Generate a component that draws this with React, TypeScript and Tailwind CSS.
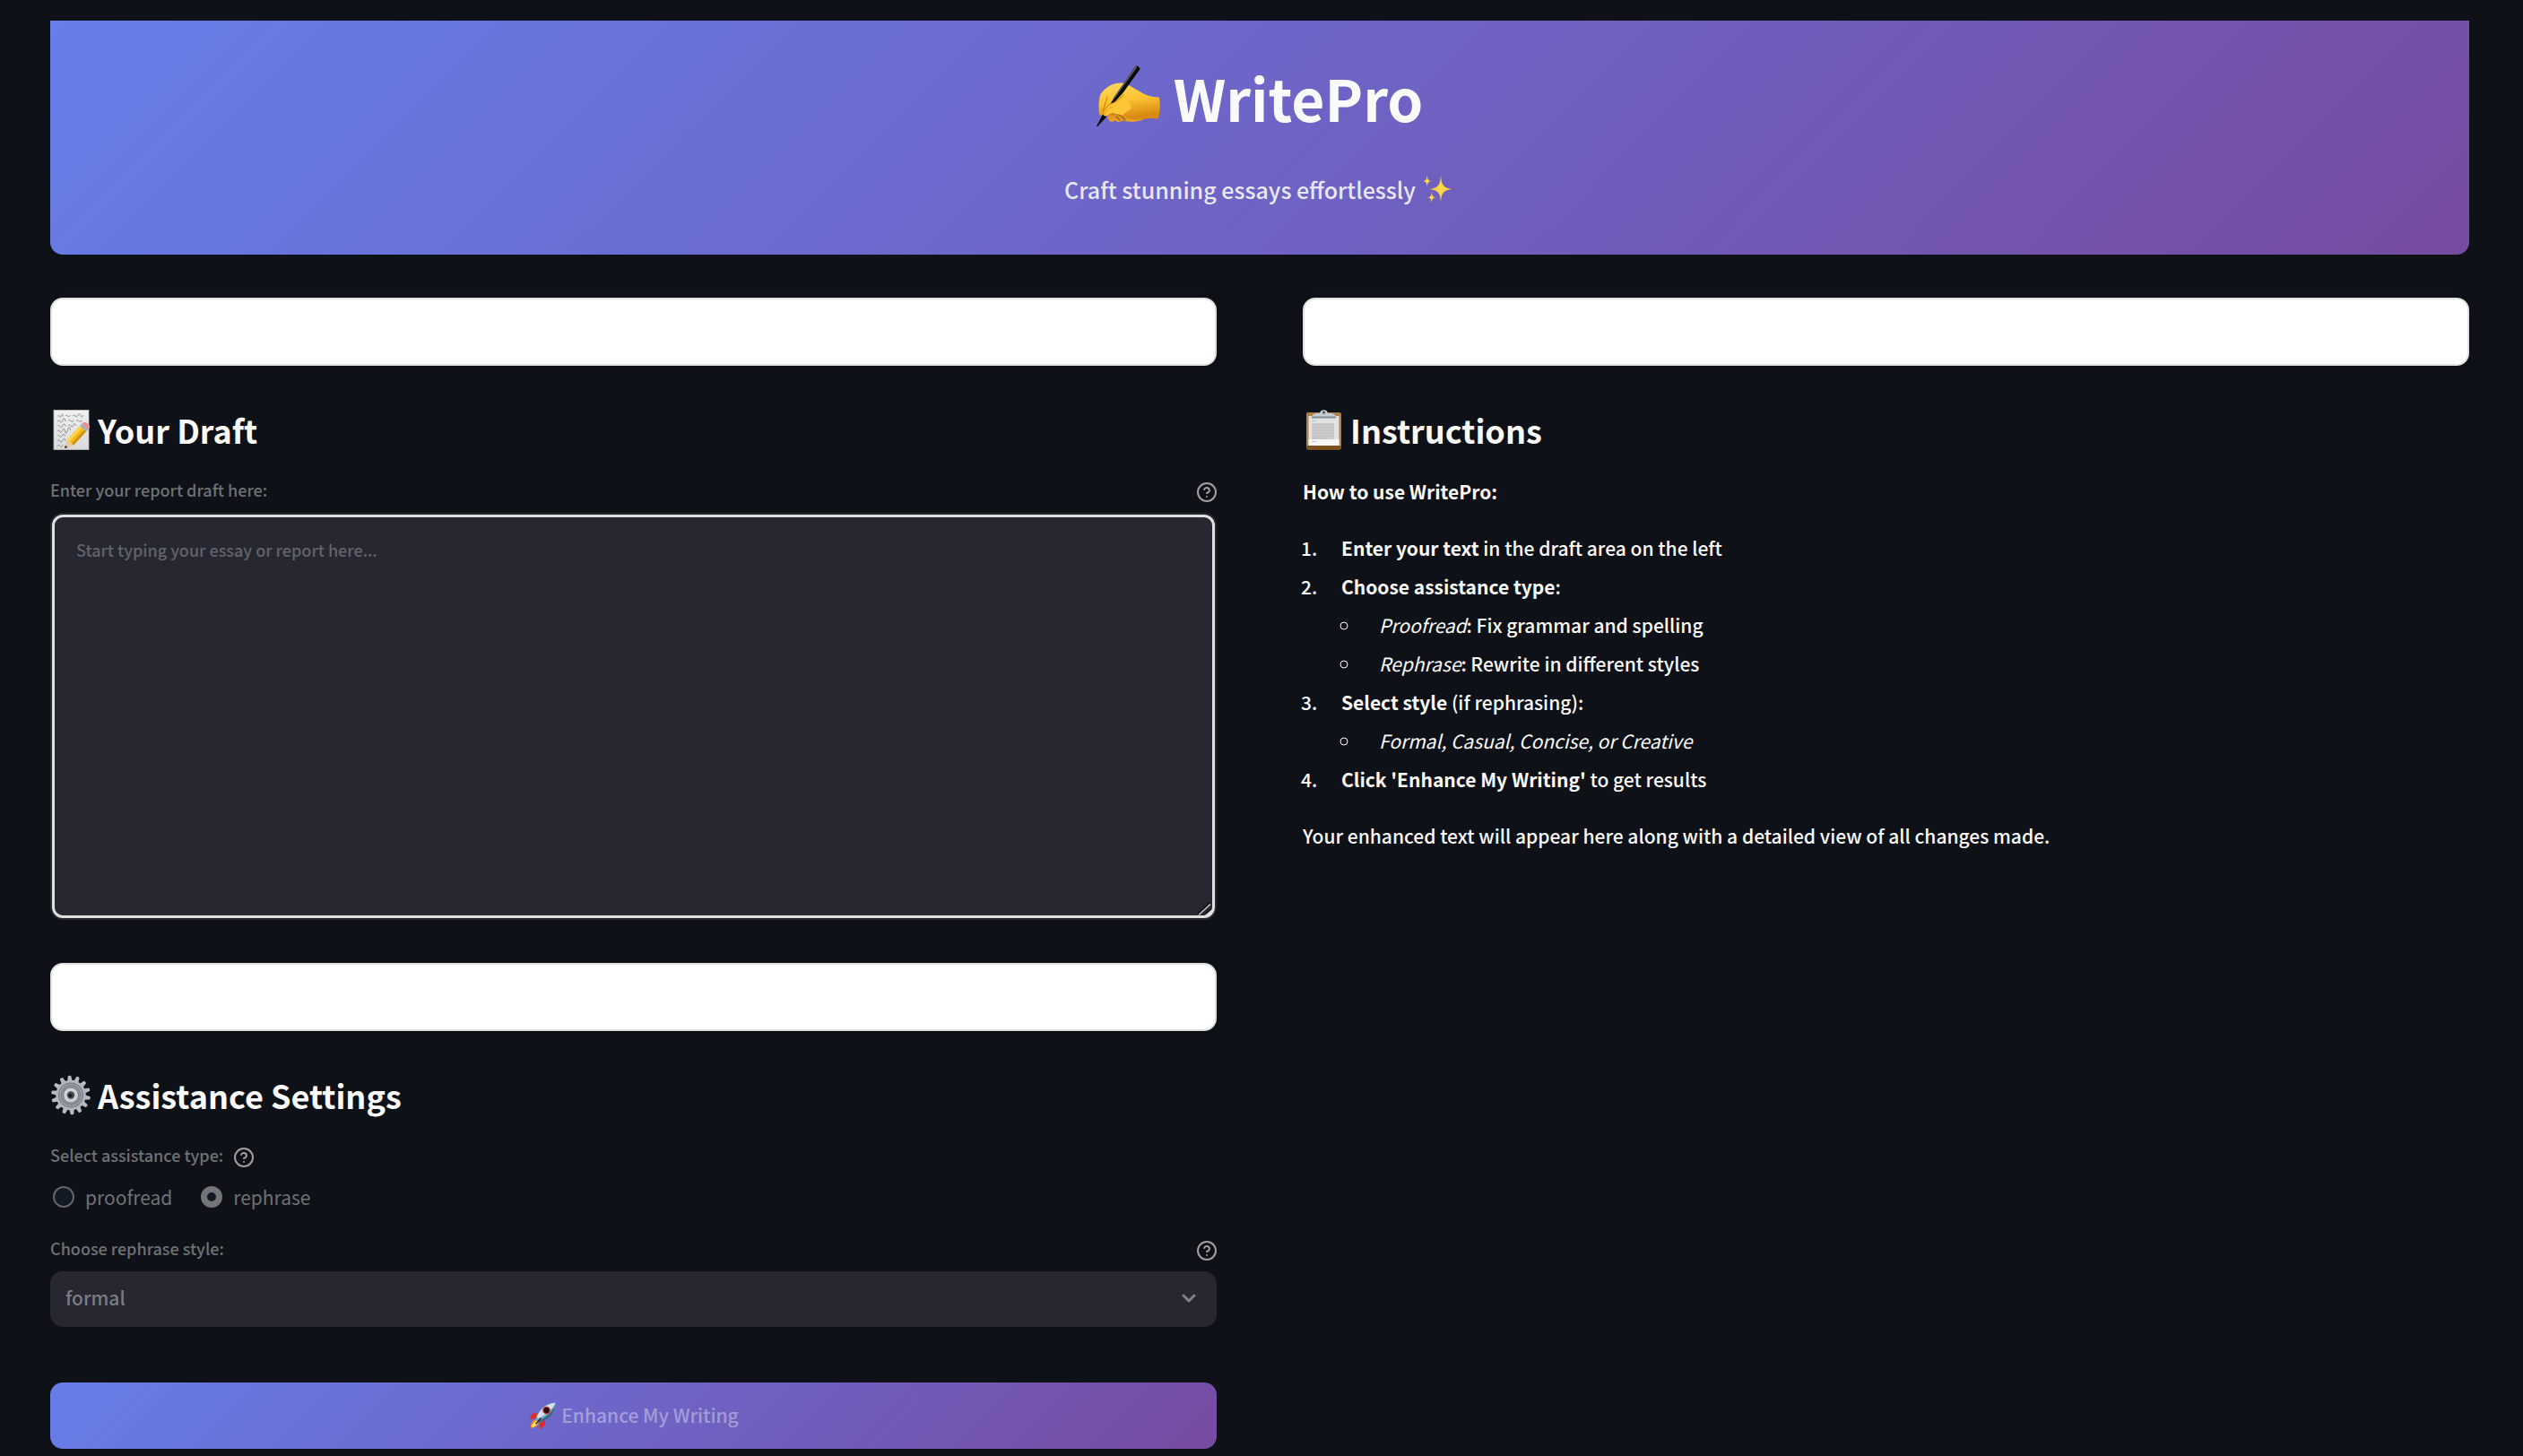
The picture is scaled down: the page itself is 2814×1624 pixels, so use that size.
import { useState } from "react";

function WritingHand() {
  return (
    <svg viewBox="0 0 72 70" className="w-[72px] shrink-0" aria-hidden="true">
      <defs>
        <linearGradient id="skin" x1="0" y1="0" x2="0.25" y2="1">
          <stop offset="0" stopColor="#ffd95e" />
          <stop offset="0.55" stopColor="#fcc231" />
          <stop offset="1" stopColor="#d98a10" />
        </linearGradient>
        <linearGradient id="curl" x1="0" y1="0" x2="0" y2="1">
          <stop offset="0" stopColor="#b86d10" />
          <stop offset="1" stopColor="#f0a824" />
        </linearGradient>
      </defs>
      <path d="M12 52c0 6 1 10 4 10.500 2 .5 4-.500 5-1.500 1 2 3 2.500 6 1.500 1-.300 1.500-.800 2-1.200 5 2.200 14 1.700 22-.300l5-8-30-8z" fill="url(#curl)" />
      <path d="M3 54C2 46 3 36 4.500 32 7 28 14 22 20 20.500c5-1.500 11-1.500 15 1L48 29c6 3.500 12 6.500 21.500 6.500 2 4 2 17-1 24-7-1-11-.500-16 .500-7 1.500-15 .300-21-3-5-3-8-4.500-11-3.500L11 56c-3 1.500-6 .500-8-2z" fill="url(#skin)" />
      <path d="M7 52c3-5 6-8 10-9.500 5-3 10-5 13-10M12 35l-5 16" fill="none" stroke="#d9900f" strokeWidth="1.300" strokeLinecap="round" />
      <path d="M17 54c4-2 7 0 10 2M22 57l4 4M28 57l4 4" fill="none" stroke="#a35d0c" strokeWidth="1.200" strokeLinecap="round" />
      <path d="M43.500.800c2-.800 5 1.200 4.900 3.400L30 30l-9 10c-2 1.500-4 1.500-5.500 2.500z" fill="#0b0b0c" />
      <path d="M43.500.800 18 37.500l2.500-1L45.500 1.800z" fill="#55565a" />
      <path d="M7 54.500 11 57.500 1 68.200c-.500.300-.900 0-.8-.700z" fill="#0b0b0c" />
      <path d="M9 52c2-5 6-9 11-9.500 5 0 10-3 13-8l6 13-10 8-13-2.500c-3 1.500-5 4-8 3z" fill="#fdc637" />
      <path d="M9 55c1.500-5 5-8 9-8.500" fill="none" stroke="#e8a51e" strokeWidth="1.200" />
    </svg>
  );
}

function Sparkles() {
  return (
    <svg viewBox="0 0 36 36" className="w-9 shrink-0" aria-hidden="true">
      <defs>
        <radialGradient id="spark">
          <stop offset="0" stopColor="#ffe14a" />
          <stop offset="0.6" stopColor="#f8c548" />
          <stop offset="1" stopColor="#e9a23c" />
        </radialGradient>
      </defs>
      <path d="M20 2c.8 11 2.200 14.300 12.500 16C22.200 19.500 20.800 22.500 20 33c-.8-10.500-2.200-13.500-12.500-15C17.800 16.300 19.200 13 20 2z" fill="url(#spark)" />
      <path d="M4.800 1.500c.4 5.500 1 7 5 7.500-4 .500-4.600 2-5 7.500-.4-5.500-1-7-5-7.500 4-.500 4.600-2 5-7.500z" fill="url(#spark)" />
      <path d="M9.800 20.500c.4 5 1 6.200 5 6.800-4 .600-4.600 1.800-5 6.800-.4-5-1-6.200-5-6.800 4-.600 4.600-1.800 5-6.800z" fill="url(#spark)" />
    </svg>
  );
}

function Memo() {
  return (
    <svg viewBox="0 0 45 45" className="w-[45px] shrink-0" aria-hidden="true">
      <defs>
        <linearGradient id="sheet" x1="0" y1="0" x2="0" y2="1">
          <stop offset="0" stopColor="#f0f0f0" />
          <stop offset="1" stopColor="#dadada" />
        </linearGradient>
      </defs>
      <rect x="4" y="0.500" width="39" height="44" fill="url(#sheet)" stroke="#b9b9b9" strokeWidth="0.800" />
      <path
        d="M8 7.500q1.500-2.500 2.500 0t2-1 2 1M17 7q1-2 2.500 0t3-1M25 7q1.500-2 3 0t3-1 3 .500 3-.500M8 13q2-3 3 0t3-1.500 3 1.500M20 12.500q1-2.500 3 0t3-.800M29 12.500q1-2 3 0t4-.500M8 18.500q1.500-3 3 0t3-1 3 1M20 18q1-2.500 3 0t3-1 3 .800M8 24q1.500-3 2.500 0t3-1 3 1 3-1.500 3 .500M8 29.500q1-2.500 2.500 0t3-1 3 1M8 35q2-3 3 0t3-1 3 .800M8 40.500q1.500-3 3 0t3-1"
        fill="none"
        stroke="#8a8a8e"
        strokeWidth="0.900"
      />
      <path d="M19 33.500 33 18l7 6.500L26 39.500z" fill="#f5b81c" />
      <path d="M19 33.500 33 18l2.500 2.300L21.500 36z" fill="#ffd447" />
      <path d="M24 37.800 38 22.600l2 1.900L26 39.500z" fill="#cf8e12" />
      <path d="M19 33.500l7 6-8.500 3.200c-1 .300-1.600-.300-1.300-1.300z" fill="#ecc79b" />
      <path d="M16.900 39.700l2.600 2.300-2 .700c-1 .300-1.600-.300-1.300-1.300z" fill="#333" />
      <path d="M33 18l2.500-2.700 7 6.500-2.500 2.700z" fill="#a9adb3" />
      <path d="M35.500 15.300c1.500-1.500 4-2 6.500.200 2.600 2.200 2.700 4.500 1 6.300l-.500.500z" fill="#ee8f93" />
    </svg>
  );
}

function ClipboardEmoji() {
  return (
    <svg viewBox="0 0 45 45" className="w-[45px] shrink-0" aria-hidden="true">
      <rect x="4" y="3" width="39" height="41.500" rx="2" fill="#b08144" />
      <rect x="4" y="40" width="39" height="4.500" rx="1.500" fill="#7d501e" />
      <path d="M6.500 7h34v33h-34z" fill="#e2e2e2" />
      <path d="M6.500 33h34v7h-34z" fill="#f6f6f6" />
      <rect x="10" y="15" width="25" height="18" fill="#cdcdcd" />
      <path d="M10 12.500h5M11 17h23M11 20h24M11 23h22M11 26h24M11 29h23M11 32h16M10 35.500h5" stroke="#bebebe" strokeWidth="0.900" />
      <path d="M10 9c0-3 2-4.500 5-5h4c1-3 2-3.700 4.500-3.700S27 1 28 4h4c3 .500 5 2 5 5z" fill="#c4cbd1" />
      <path d="M10 7.500h27V9.500H10z" fill="#858b91" />
      <circle cx="23.500" cy="3" r="1.500" fill="#4c5157" />
    </svg>
  );
}

const TEETH = [0, 1, 2, 3, 4, 5, 6, 7, 8, 9, 10, 11, 12, 13];

function GearEmoji() {
  return (
    <svg viewBox="0 0 45 45" className="w-[45px] shrink-0" aria-hidden="true">
      {TEETH.map((n) => (
        <path key={n} d="M20.300 7l.900-5.800c.1-.800 3.500-.800 3.600 0l.900 5.800z" fill="#b5bbc4" transform={`rotate(${(n * 360) / 14 - 4} 23 22.500)`} />
      ))}
      <circle cx="23" cy="22.500" r="16.800" fill="#b0b5be" />
      <circle cx="23" cy="22.500" r="14" fill="#7c8087" />
      <circle cx="23" cy="22.500" r="12" fill="none" stroke="#a4a8af" strokeWidth="1.200" />
      <circle cx="23" cy="22.500" r="9.800" fill="none" stroke="#989ca3" strokeWidth="1" />
      <circle cx="23" cy="22.500" r="8" fill="#ccd1d9" />
      <circle cx="23" cy="22.500" r="4.200" fill="#4d4745" />
      <circle cx="22.500" cy="23" r="2" fill="#17181c" />
    </svg>
  );
}

function Rocket() {
  return (
    <svg viewBox="0 0 32 32" className="w-8 shrink-0" aria-hidden="true">
      <path d="M12 13 5 13.500 1.500 20l7-1zM19 20l-.5 7-5.500 4 .5-7z" fill="#e8281c" />
      <path d="M9 20c-4 1-6 4-6.500 10C7 29 11 28 12.500 23z" fill="#f58a1c" />
      <path d="M9.500 21.500C6 23 4.500 26 4 29c3-.500 6-2 7.500-5.500z" fill="#ffe75a" />
      <path d="M30.500 1.800C21 2 13 8 9 17.500l-.5 3.200 3 3 3.500-1C25 18.500 30.500 11 30.500 1.800z" fill="#7fa9c9" />
      <path d="M30.500 1.800C22 2 14 8 10 17l2 2C20 15 27 9 30.500 1.800z" fill="#cfe2ee" />
      <path d="M15 22.700 11.500 23.700l-1.500-1.500C19 19 26.500 12 30 5c-.5 8-6 14.500-15 17.700z" fill="#3f6684" />
      <circle cx="20.500" cy="10" r="4.300" fill="#c0282a" />
      <circle cx="20.500" cy="10" r="3" fill="#1a1416" />
      <path d="M9 25l5-6" stroke="#2b2b2b" strokeWidth="1.500" strokeLinecap="round" />
    </svg>
  );
}

function HelpButton({ label }: { label: string }) {
  return (
    <button type="button" aria-label={label} className="shrink-0 text-[#a0a0a1]">
      <svg viewBox="1 1 22 22" fill="none" stroke="currentColor" strokeWidth="2" strokeLinecap="round" strokeLinejoin="round" className="w-[22px]" aria-hidden="true">
        <circle cx="12" cy="12" r="10" />
        <path d="M9.090 9a3 3 0 0 1 5.830 1c0 2-3 3-3 3" />
        <path d="M12 17h.01" />
      </svg>
    </button>
  );
}

function Card() {
  return <div className="h-[76px] rounded-[14px] border-2 border-[#e0e0e0] bg-white shadow-[0_4px_12px_rgba(0,0,0,0.12)]" />;
}

function Radio({ value, selected, onSelect }: { value: string; selected: string; onSelect: (v: string) => void }) {
  return (
    <label className="flex items-center gap-3 text-[21px] leading-9 text-[#6f7175]">
      <input
        type="radio"
        name="assistance"
        value={value}
        checked={selected === value}
        onChange={() => onSelect(value)}
        className="size-6 appearance-none rounded-full border-2 border-[#63656a] bg-[#131924] checked:border-[7px] checked:border-[#747579]"
      />
      {value}
    </label>
  );
}

const HEADING = "mt-11 flex items-center gap-2 text-4xl leading-[54px] font-bold";
const LABEL = "text-lg leading-7 font-medium text-[#6f7175]";

export default function App() {
  const [type, setType] = useState("rephrase");
  return (
    <main className="min-h-screen bg-[#0e1117] pt-[23px] pr-[60px] pb-2 pl-14 font-['Noto_Sans_CJK_SC',sans-serif] text-[#fafafa]">
      <header className="flex flex-col items-center rounded-b-[14px] bg-[linear-gradient(135deg,#667eea_0%,#764ba2_100%)] pt-10 pb-[55px]">
        <h1 className="flex items-center gap-[14px] text-[64px] leading-[90px] font-bold">
          <WritingHand />
          WritePro
        </h1>
        <p className="mt-10 flex items-center gap-2 text-[25px] leading-9 font-medium text-[#fafafa]/90">
          Craft stunning essays effortlessly
          <Sparkles />
        </p>
      </header>

      <div className="mt-12 grid grid-cols-2 gap-24">
        <section>
          <Card />
          <h2 className={HEADING}>
            <Memo />
            Your Draft
          </h2>
          <div className="mt-[26px] flex items-end justify-between">
            <label htmlFor="draft" className={LABEL}>Enter your report draft here:</label>
            <HelpButton label="Help for the draft" />
          </div>
          <div className="relative mt-3 rounded-[14px] border-2 border-[#262730]">
            <textarea
              id="draft"
              placeholder="Start typing your essay or report here..."
              className="block h-[450px] w-full resize-none rounded-xl border-[3px] border-[#e0e0e0] bg-[#262730] px-6 py-[23px] text-lg leading-[27px] font-medium outline-none placeholder:text-[#62636b]"
            />
            <svg viewBox="0 0 18 18" className="pointer-events-none absolute right-px bottom-px w-[18px]" aria-hidden="true">
              <path d="M0 14.500 13 2M9 14.500 15 9" stroke="#101014" strokeWidth="2" />
              <path d="M1 15.500 14 3.500" stroke="#c9c9cb" strokeWidth="1.500" />
              <path d="M8 16c5 0 8-3 8-7z" fill="#e0e0e0" />
            </svg>
          </div>

          <div className="mt-12">
            <Card />
          </div>
          <h2 className={HEADING}>
            <GearEmoji />
            Assistance Settings
          </h2>
          <fieldset className="mt-[26px]">
            <legend className="flex items-end gap-3">
              <span className={LABEL}>Select assistance type:</span>
              <HelpButton label="Help for the assistance type" />
            </legend>
            <div className="mt-[15px] ml-[3px] flex gap-8">
              <Radio value="proofread" selected={type} onSelect={setType} />
              <Radio value="rephrase" selected={type} onSelect={setType} />
            </div>
          </fieldset>
          <div className="mt-[25px] flex items-end justify-between">
            <label htmlFor="style" className={LABEL}>Choose rephrase style:</label>
            <HelpButton label="Help for the rephrase style" />
          </div>
          <div className="relative mt-3">
            <select id="style" className="block h-[62px] w-full appearance-none rounded-[14px] bg-[#262730] px-[17px] pb-[3px] text-[21px] font-medium text-[#7b7c82]">
              <option>formal</option>
              <option>casual</option>
              <option>concise</option>
              <option>creative</option>
            </select>
            <svg viewBox="0 0 16 10" fill="none" stroke="#808186" strokeWidth="3" strokeLinecap="round" strokeLinejoin="round" className="pointer-events-none absolute top-[25px] right-[23px] w-4" aria-hidden="true">
              <path d="M2 2l6 6 6-6" />
            </svg>
          </div>
          <button type="button" className="mt-[62px] flex h-[74px] w-full items-center justify-center gap-[5px] rounded-[14px] bg-[linear-gradient(135deg,#667eea_0%,#764ba2_100%)] text-[21px] font-medium text-[#fafafa]/40">
            <Rocket />
            Enhance My Writing
          </button>
        </section>

        <section className="text-[21px] leading-[43px] font-medium">
          <Card />
          <h2 className={HEADING}>
            <ClipboardEmoji />
            Instructions
          </h2>
          <p className="mt-[21px] font-bold">How to use WritePro:</p>
          <ol className="mt-5 list-decimal pl-[21px] [&>li]:pl-[22px]">
            <li><strong>Enter your text</strong> in the draft area on the left</li>
            <li>
              <strong>Choose assistance type</strong>:
              <ul className="list-[circle] pl-[22px] [&>li]:pl-5">
                <li><em className="font-normal">Proofread</em>: Fix grammar and spelling</li>
                <li><em className="font-normal">Rephrase</em>: Rewrite in different styles</li>
              </ul>
            </li>
            <li>
              <strong>Select style</strong> (if rephrasing):
              <ul className="list-[circle] pl-[22px] [&>li]:pl-5">
                <li><em className="font-normal">Formal, Casual, Concise, or Creative</em></li>
              </ul>
            </li>
            <li><strong>Click 'Enhance My Writing'</strong> to get results</li>
          </ol>
          <p className="mt-5">Your enhanced text will appear here along with a detailed view of all changes made.</p>
        </section>
      </div>
    </main>
  );
}
